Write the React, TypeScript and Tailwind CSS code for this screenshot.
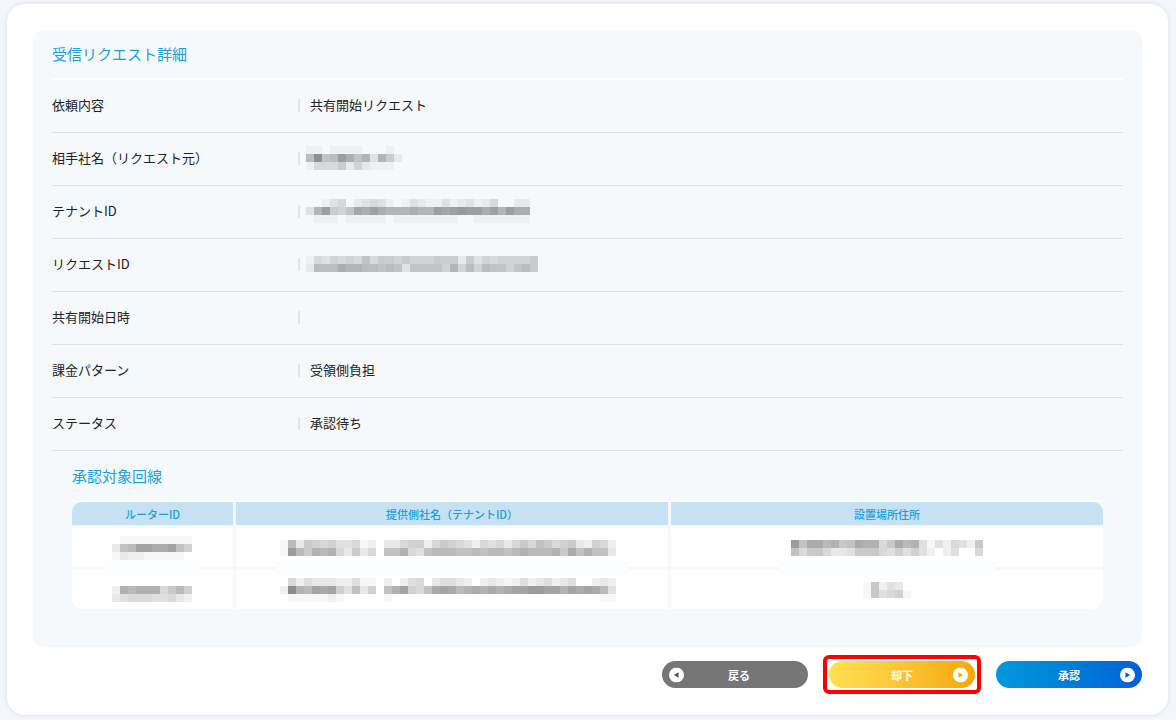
import classNames from 'clsx';

// one hex digit per cell, 0 = clear, f = darkest
function Mosaic({ rows, className }: { rows: string[]; className?: string }) {
  const cell = 8;
  const width = rows[0].length * cell;
  const height = rows.length * cell;
  return (
    <svg
      width={width}
      height={height}
      viewBox={`0 0 ${width} ${height}`}
      shapeRendering="crispEdges"
      className={classNames('block shrink-0', className)}
      aria-hidden="true"
    >
      {rows.map((row, y) =>
        row
          .split('')
          .map((c, x) => (
            <rect
              key={`${x}-${y}`}
              x={x * cell}
              y={y * cell}
              width={cell}
              height={cell}
              fill="#000"
              fillOpacity={parseInt(c, 16) * 0.03}
            />
          ))
      )}
    </svg>
  );
}

const details: { label: string; text?: string; mask?: string[] }[] = [
  { label: '依頼内容', text: '共有開始リクエスト' },
  {
    label: '相手社名（リクエスト元）',
    mask: ['110111100010', '8e78ca793962', '144462521110'],
  },
  {
    label: 'テナントID',
    mask: [
      '0013402343101321131231240022',
      '39c657baca999a99cbcdccac9caa',
      '0111011111011111111001111111',
    ],
  },
  {
    label: 'リクエストID',
    mask: ['14354547466565556662635455556', '2888a998878737777595858775786'],
  },
  { label: '共有開始日時' },
  { label: '課金パターン', text: '受領側負担' },
  { label: 'ステータス', text: '承認待ち' },
];

const columns = ['ルーターID', '提供側社名（テナントID）', '設置場所住所'];

const lines = [
  [
    ['0111111111', '389ccbbc86', '1322111110'],
    [
      '1937656445120' + '335662576542545' + '357587567326520',
      '1d97a9a537350' + '88a548999889899' + '89a999a7b8a8830',
    ],
    ['d8bb9a78baa57b9a41425427', '857753347775464642024005'],
  ],
  [
    ['0000000000', '2a9aaa5796', '3455544532'],
    [
      '0524333224110' + '202450344320232' + '124234234002320',
      '2fa9cbc648360' + '8ac658bcb9ababa' + 'bccddccacbcb940',
      '0111112100000' + '100000000000000' + '000000000000110',
    ],
    ['172430', '174561'],
  ],
];

const bands = ['w-24', 'w-[352px]', 'w-[216px]'];

function ArrowIcon({ back, className }: { back?: boolean; className: string }) {
  return (
    <svg
      viewBox="0 0 14 14"
      className={classNames('absolute top-1/2 size-[15px] -translate-y-1/2', className)}
      aria-hidden="true"
    >
      <circle cx="7" cy="7" r="7" fill="#fff" />
      <path d={back ? 'M8.9 4.4v5.2L4.5 7z' : 'M5.1 4.4v5.2L9.5 7z'} fill="currentColor" />
    </svg>
  );
}

const buttonStyle =
  'relative block h-[27px] w-[146px] rounded-full text-[11px] leading-4 font-bold text-white cursor-pointer';

export default function App() {
  return (
    <div className="min-h-screen bg-[#f3f7fb] pt-1 pr-2 pb-[5px] pl-[7px] font-['Noto_Sans_CJK_JP',sans-serif] text-[#222]">
      <main className="rounded-[18px] bg-white px-[26px] pt-[26px] pb-[27px] shadow-[0_0_5px_rgba(0,0,0,0.1)]">
        <section className="rounded-[10px] bg-[#f5f9fc] pr-[19px] pb-[38px] pl-[19px]">
          <h1 className="flex h-[50px] items-center border-b-2 border-white text-[15px] leading-5 text-[#1b9fdb]">
            受信リクエスト詳細
          </h1>

          <dl className="text-[13px] leading-5">
            {details.map((item) => (
              <div
                key={item.label}
                className="flex h-[53px] items-center border-b border-[#dde2e5] pb-0.5"
              >
                <dt className="w-[246px] shrink-0">{item.label}</dt>
                <dd className="flex items-center">
                  <span className="mr-2.5 h-[13px] w-0.5 bg-[#e1e5e8]" />
                  {item.text}
                  {item.mask && <Mosaic rows={item.mask} className="-ml-1" />}
                </dd>
              </div>
            ))}
          </dl>

          <div className="px-5">
            <h2 className="flex h-[51px] items-center border-b-2 border-[#fbfdfe] text-[15px] leading-5 text-[#1b9fdb]">
              承認対象回線
            </h2>
            <div className="-m-[3px]">
              <table className="w-full table-fixed border-separate border-spacing-[3px]">
                <colgroup>
                  <col className="w-[15.7%]" />
                  <col />
                  <col />
                </colgroup>
                <thead>
                  <tr>
                    {columns.map((name) => (
                      <th
                        key={name}
                        scope="col"
                        className="h-[23px] bg-[#c6e1f4] p-0 text-[11px] leading-4 font-medium text-[#1b9fdb] first:rounded-tl-[10px] last:rounded-tr-[10px]"
                      >
                        {name}
                      </th>
                    ))}
                  </tr>
                </thead>
                <tbody>
                  {lines.map((line, i) => (
                    <tr key={i} className="group">
                      {line.map((mask, j) => (
                        <td
                          key={j}
                          className="relative h-[39px] bg-white p-0 group-last:first:rounded-bl-[10px] group-last:last:rounded-br-[10px]"
                        >
                          <Mosaic rows={mask} className="mx-auto" />
                          {i === 0 && (
                            <span
                              className={classNames(
                                'absolute -bottom-2 left-1/2 z-10 h-3.5 -translate-x-1/2 bg-[#fcfdff]',
                                bands[j]
                              )}
                            />
                          )}
                        </td>
                      ))}
                    </tr>
                  ))}
                </tbody>
              </table>
            </div>
          </div>
        </section>

        <div className="mt-3.5 flex justify-end gap-[21px]">
          <button type="button" className={classNames(buttonStyle, 'bg-[#767676]')}>
            <ArrowIcon back className="left-[7px] text-[#555]" />
            <span className="pl-2">戻る</span>
          </button>
          <div className="relative">
            <button
              type="button"
              className={classNames(buttonStyle, 'bg-linear-to-r from-[#ffe150] to-[#f5a800]')}
            >
              却下
              <ArrowIcon className="right-[7px] text-[#f5a800]" />
            </button>
            <span className="pointer-events-none absolute -inset-1.5 rounded-md border-4 border-[#ff0000]" />
          </div>
          <button
            type="button"
            className={classNames(buttonStyle, 'bg-linear-to-r from-[#0099dc] to-[#0060d8]')}
          >
            承認
            <ArrowIcon className="right-[7px] text-[#0060d8]" />
          </button>
        </div>
      </main>
    </div>
  );
}
